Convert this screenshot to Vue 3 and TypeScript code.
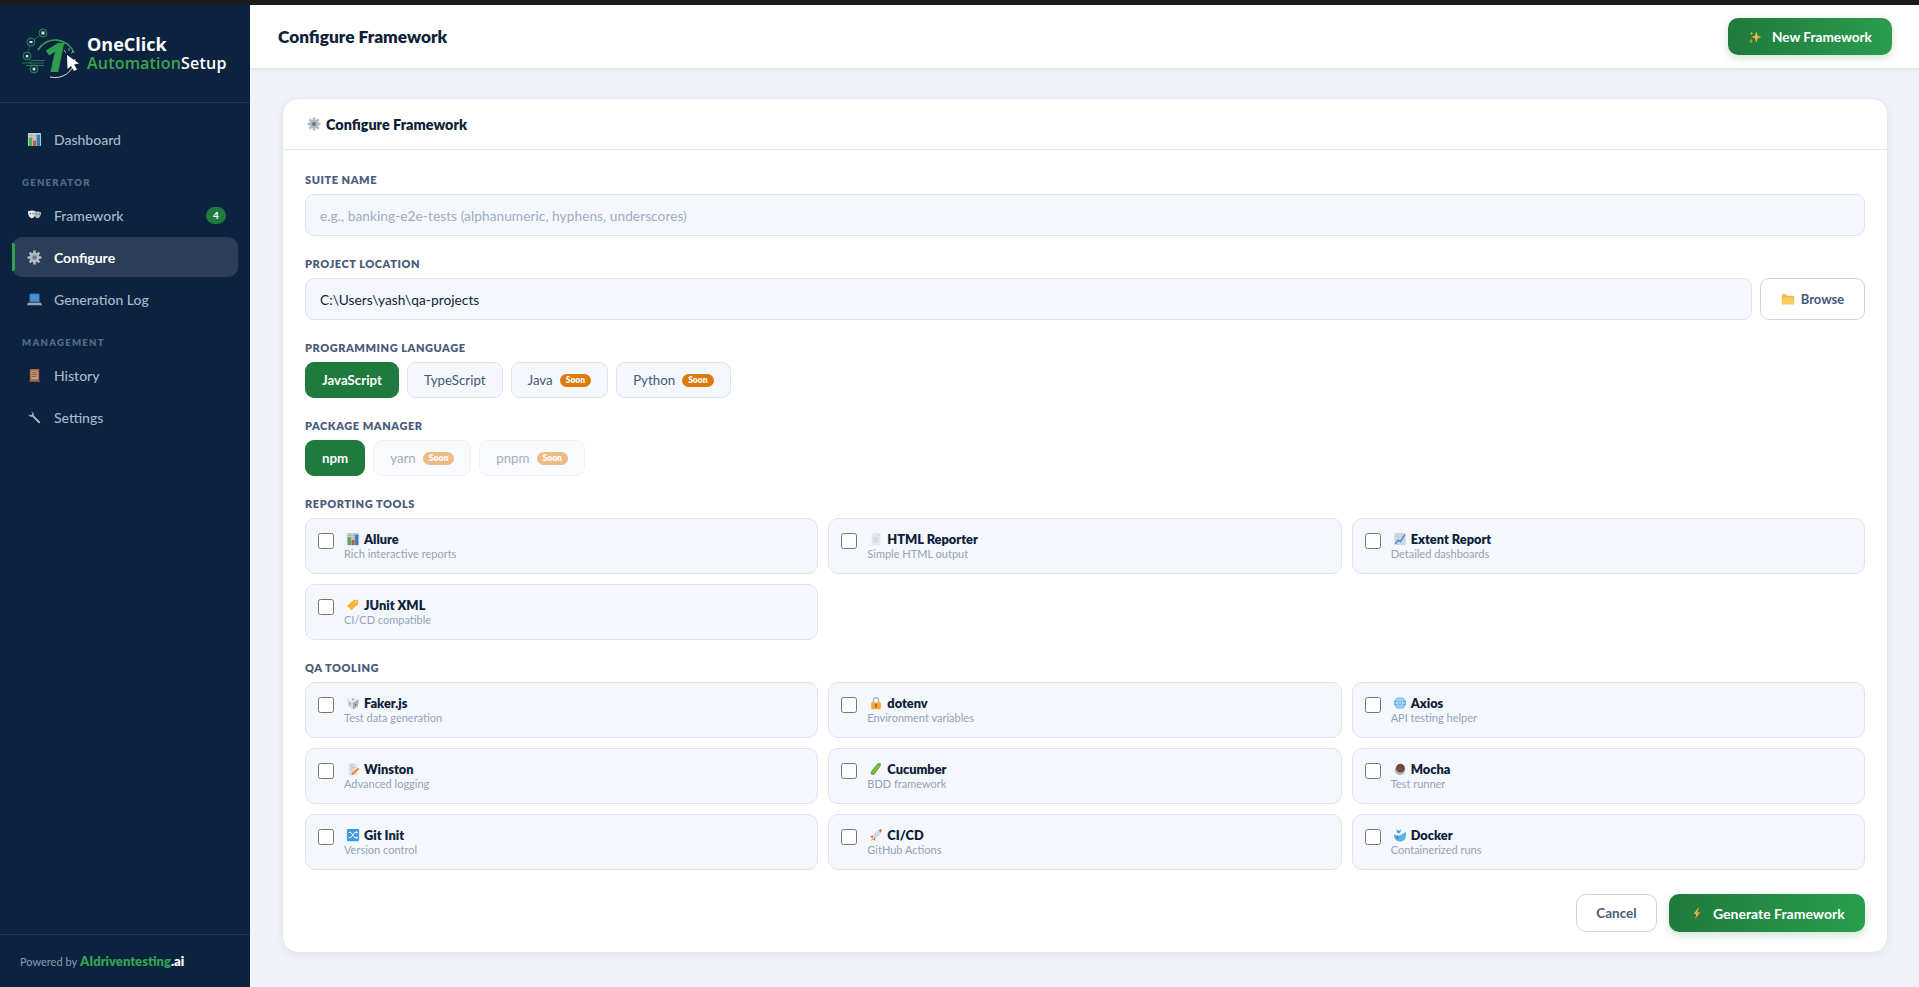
<template>
  <div class="page">
    <div class="top-strip"></div>
    <div class="shell">
      <aside class="sidebar">
        <div class="brand">
          <svg class="brand-mark" viewBox="0 0 60 52">
            <path d="M21 5 L9 14 L5 28 L12 41" fill="none" stroke="#2f6b58" stroke-width="0.8" />
            <g fill="#12304a" stroke="#2f9e4f" stroke-width="0.8">
              <circle cx="21" cy="5" r="4" />
              <circle cx="9" cy="14" r="4" />
              <circle cx="5" cy="28" r="4" />
              <circle cx="12" cy="41" r="4" />
            </g>
            <g fill="#d5dde6">
              <rect x="19.500" y="3.500" width="3" height="3" />
              <rect x="7.500" y="13" width="3" height="2" />
              <rect x="3.800" y="27" width="2.500" height="2.400" />
              <circle cx="12" cy="41" r="1.500" />
            </g>
            <path d="M16 22 A20 20 0 0 1 52 25" fill="none" stroke="#2f9e4f" stroke-width="1.600" />
            <path d="M28 49 A20 20 0 0 0 53 31" fill="none" stroke="#d5dde6" stroke-width="1" />
            <path d="M0 35 H22 M4 37.500 H22 M9 32.500 H23" stroke="#2f9e4f" stroke-width="0.700" />
            <text x="21" y="44" class="brand-one">1</text>
            <path d="M45 27 L45.500 41 L49 38 L52 43 L55 41.500 L52 36.500 L57 35.500 Z" fill="#fff" />
            <path d="M42 22 L44 25 M47 20 V23 M51 23 L49.500 25.500" stroke="#c8d3dc" stroke-width="0.700" />
          </svg>
          <div class="brand-text">
            <div class="brand-top">OneClick</div>
            <div class="brand-bottom"><span>Automation</span>Setup</div>
          </div>
        </div>

        <nav class="nav">
          <a class="nav-item"><svg class="nav-icon" viewBox="0 0 16 16" v-html="icons.chart"></svg>Dashboard</a>
          <div class="nav-label">GENERATOR</div>
          <a class="nav-item">
            <svg class="nav-icon" viewBox="0 0 16 16" v-html="icons.masks"></svg>Framework
            <span class="nav-badge">4</span>
          </a>
          <a class="nav-item active"><svg class="nav-icon" viewBox="0 0 16 16" v-html="icons.gear"></svg>Configure</a>
          <a class="nav-item"><svg class="nav-icon" viewBox="0 0 16 16" v-html="icons.laptop"></svg>Generation Log</a>
          <div class="nav-label">MANAGEMENT</div>
          <a class="nav-item"><svg class="nav-icon" viewBox="0 0 16 16" v-html="icons.scroll"></svg>History</a>
          <a class="nav-item"><svg class="nav-icon" viewBox="0 0 16 16" v-html="icons.wrench"></svg>Settings</a>
        </nav>

        <div class="powered">
          Powered by <b class="powered-name">AIdriventesting<i>.ai</i></b>
        </div>
      </aside>

      <div class="main">
        <header class="topbar">
          <h1>Configure Framework</h1>
          <button class="btn-green new-btn" type="button">
            <svg class="btn-icon" viewBox="0 0 16 16" v-html="icons.sparkles"></svg>New Framework
          </button>
        </header>

        <div class="content">
          <section class="card">
            <div class="card-head">
              <svg class="head-icon" viewBox="0 0 16 16" v-html="icons.gear"></svg>Configure Framework
            </div>
            <form class="card-body" @submit.prevent>
              <label class="field-label">SUITE NAME</label>
              <input
                class="text-input"
                type="text"
                v-model="suiteName"
                placeholder="e.g., banking-e2e-tests (alphanumeric, hyphens, underscores)"
              />

              <label class="field-label">PROJECT LOCATION</label>
              <div class="location-row">
                <input class="text-input" type="text" v-model="location" />
                <button class="browse-btn" type="button">
                  <svg class="browse-icon" viewBox="0 0 16 16" v-html="icons.folder"></svg>Browse
                </button>
              </div>

              <label class="field-label">PROGRAMMING LANGUAGE</label>
              <div class="chips">
                <button
                  v-for="l in languages"
                  :key="l.name"
                  type="button"
                  class="chip"
                  :class="{ selected: l.selected }"
                >
                  {{ l.name }}<span v-if="l.soon" class="soon">Soon</span>
                </button>
              </div>

              <label class="field-label">PACKAGE MANAGER</label>
              <div class="chips">
                <button
                  v-for="p in managers"
                  :key="p.name"
                  type="button"
                  class="chip"
                  :class="{ selected: p.selected, disabled: p.soon }"
                >
                  {{ p.name }}<span v-if="p.soon" class="soon">Soon</span>
                </button>
              </div>

              <label class="field-label">REPORTING TOOLS</label>
              <div class="tool-grid">
                <label v-for="t in reporting" :key="t.name" class="tool">
                  <input type="checkbox" class="tool-check" />
                  <span class="tool-text">
                    <span class="tool-name">
                      <svg class="tool-icon" viewBox="0 0 16 16" v-html="icons[t.icon]"></svg>{{ t.name }}
                    </span>
                    <span class="tool-desc">{{ t.desc }}</span>
                  </span>
                </label>
              </div>

              <label class="field-label">QA TOOLING</label>
              <div class="tool-grid">
                <label v-for="t in tooling" :key="t.name" class="tool">
                  <input type="checkbox" class="tool-check" />
                  <span class="tool-text">
                    <span class="tool-name">
                      <svg class="tool-icon" viewBox="0 0 16 16" v-html="icons[t.icon]"></svg>{{ t.name }}
                    </span>
                    <span class="tool-desc">{{ t.desc }}</span>
                  </span>
                </label>
              </div>

              <div class="actions">
                <button class="cancel-btn" type="button">Cancel</button>
                <button class="btn-green generate-btn" type="submit">
                  <svg class="btn-icon" viewBox="0 0 16 16" v-html="icons.bolt"></svg>Generate Framework
                </button>
              </div>
            </form>
          </section>
        </div>
      </div>
    </div>
  </div>
</template>

<script setup lang="ts">
import { ref } from 'vue';

const suiteName = ref('');
const location = ref('C:\\Users\\yash\\qa-projects');

const languages = [
  { name: 'JavaScript', selected: true, soon: false },
  { name: 'TypeScript', selected: false, soon: false },
  { name: 'Java', selected: false, soon: true },
  { name: 'Python', selected: false, soon: true },
];

const managers = [
  { name: 'npm', selected: true, soon: false },
  { name: 'yarn', selected: false, soon: true },
  { name: 'pnpm', selected: false, soon: true },
];

const reporting = [
  { name: 'Allure', desc: 'Rich interactive reports', icon: 'chart' },
  { name: 'HTML Reporter', desc: 'Simple HTML output', icon: 'page' },
  { name: 'Extent Report', desc: 'Detailed dashboards', icon: 'trend' },
  { name: 'JUnit XML', desc: 'CI/CD compatible', icon: 'tag' },
];

const tooling = [
  { name: 'Faker.js', desc: 'Test data generation', icon: 'dice' },
  { name: 'dotenv', desc: 'Environment variables', icon: 'lock' },
  { name: 'Axios', desc: 'API testing helper', icon: 'globe' },
  { name: 'Winston', desc: 'Advanced logging', icon: 'memo' },
  { name: 'Cucumber', desc: 'BDD framework', icon: 'cucumber' },
  { name: 'Mocha', desc: 'Test runner', icon: 'coffee' },
  { name: 'Git Init', desc: 'Version control', icon: 'shuffle' },
  { name: 'CI/CD', desc: 'GitHub Actions', icon: 'rocket' },
  { name: 'Docker', desc: 'Containerized runs', icon: 'whale' },
];

// small colour pictograms, drawn by hand on a 16 unit box
const icons: Record<string, string> = {
  chart:
    '<rect x="1" y="1" width="14" height="14" rx="1" fill="#c9ced6"/><path d="M1 4h14M1 7h14M5 1v14M10 1v14" stroke="#8e97a3" stroke-width=".5"/><rect x="2" y="6" width="3.500" height="9" fill="#4caf50"/><rect x="6.300" y="9" width="3.500" height="6" fill="#b5623c"/><rect x="10.500" y="3" width="3.500" height="12" fill="#2f7fc0"/>',
  masks:
    '<path d="M1 3.500c3-1.200 6-1.200 8 0 .2 4-1 7-4 7.500C2.500 10.500 1 7.500 1 3.500z" fill="#e6e8ec"/><path d="M7 4.500c3-1 5.500-1 8 0 0 3.500-1.500 6-4 6.500-2-.5-3.500-3-4-6.500z" fill="#b9bec8"/><circle cx="3.500" cy="6" r=".8" fill="#5b6270"/><circle cx="6.500" cy="6" r=".8" fill="#5b6270"/><circle cx="10" cy="6.500" r=".8" fill="#5b6270"/><circle cx="13" cy="6.500" r=".8" fill="#5b6270"/>',
  gear:
    '<g fill="#b4b9c4"><circle cx="8" cy="8" r="5.200"/><g stroke="#b4b9c4" stroke-width="2.800"><path d="M8 .6v14.800M.6 8h14.800M2.800 2.800l10.400 10.400M13.200 2.800 2.800 13.200"/></g></g><circle cx="8" cy="8" r="2.400" fill="#6d7482"/>',
  laptop:
    '<rect x="2.500" y="1.500" width="11" height="9.500" rx=".6" fill="#2c6fb3"/><rect x="3.500" y="2.500" width="9" height="7.500" fill="#4a90d2"/><path d="M1 11.500h14l1 2.500H0z" fill="#9aa3ae"/>',
  scroll:
    '<rect x="3" y="1" width="10" height="13" rx=".8" fill="#a86a4c"/><rect x="4.500" y="3" width="7" height="9" fill="#c79a7e"/><path d="M5.500 5h5M5.500 7h5M5.500 9h4" stroke="#6f4430" stroke-width=".8"/><path d="M2 13.500h11.500l1 1.500H3z" fill="#8c5238"/>',
  wrench:
    '<path d="M14 12.600 7.200 5.800c.5-1.700-.6-4-3-4.300L6 3.500 5 5 3 5.600 1.500 4c.1 2.400 2.200 3.800 4.100 3.100L12.500 14c.7.600 2.200-.6 1.500-1.400z" fill="#aab1bc"/>',
  sparkles:
    '<path d="M9.500 1.500 11 6.500l4.500 1.500-4.500 1.500L9.500 14.500 8 9.500 3.500 8 8 6.500z" fill="#f8b83e"/><path d="M3.500 9.500 4.200 12 6 12.700 4.200 13.400 3.500 15.500 2.800 13.400 1 12.700 2.800 12z" fill="#ef8f35"/><path d="M4 1.500 4.500 3.500 6 4 4.500 4.500 4 6 3.500 4.500 2 4 3.500 3.500z" fill="#f8b83e"/>',
  folder:
    '<path d="M1 3.500c0-.6.400-1 1-1h4l1.500 1.800H14c.6 0 1 .4 1 1V13c0 .6-.4 1-1 1H2c-.6 0-1-.4-1-1z" fill="#f6b73c"/><path d="M1 6h14v7c0 .6-.4 1-1 1H2c-.6 0-1-.4-1-1z" fill="#fbc95d"/>',
  page:
    '<path d="M3 1h7l3 3v11H3z" fill="#e6e9ef"/><path d="M10 1v3h3z" fill="#c4c9d3"/><path d="M5 7h6M5 9h6M5 11h4" stroke="#bcc2cc" stroke-width=".8"/>',
  trend:
    '<rect x="1.500" y="1" width="13" height="14" fill="#d3d8e0"/><path d="M1.500 5h13M1.500 9h13M5.500 1v14M10 1v14" stroke="#b5bcc8" stroke-width=".4"/><path d="M2.500 13.500 6 9.500l2.500 1.500 5-8" fill="none" stroke="#2f86cf" stroke-width="1.400"/>',
  tag:
    '<path d="M1 9 8.500 2.500l5.500-.7-.3 5.200L6.300 14z" fill="#f6b73c"/><circle cx="11.500" cy="4.500" r="1" fill="#f9e3ac"/>',
  dice:
    '<path d="M8 1 14.500 4 13.500 12 8 15 2.500 12 1.500 4z" fill="#d6d9df"/><path d="M8 7.500 14.500 4 8 1 1.500 4z" fill="#eceef2"/><path d="M8 7.500V15l5.500-3 1-8z" fill="#a8aeb9"/><circle cx="4.500" cy="9" r=".8" fill="#555"/><circle cx="11" cy="10" r=".8" fill="#555"/><circle cx="8" cy="4" r=".8" fill="#555"/>',
  lock:
    '<path d="M5 7.500V5a3 3 0 0 1 6 0v2.500" fill="none" stroke="#aeb4bf" stroke-width="1.500"/><rect x="2.500" y="7" width="11" height="8" rx="1" fill="#f0a838"/><rect x="7.300" y="9" width="1.400" height="4" fill="#7a5210"/>',
  globe:
    '<circle cx="8" cy="8" r="7" fill="#5db2ec"/><g fill="none" stroke="#d8eefb" stroke-width=".8"><ellipse cx="8" cy="8" rx="3.200" ry="7"/><path d="M8 1v14M1 8h14M2 4.500h12M2 11.500h12"/></g>',
  memo:
    '<path d="M3 1h7l3 3v11H3z" fill="#dfe2e8"/><path d="M5 4h4M5 6.500h6M5 9h3" stroke="#aab0bb" stroke-width=".8"/><path d="M14 6.500 15.500 8 8.500 14.500 6 15l.8-2.600z" fill="#ef8a2e"/>',
  cucumber:
    '<path d="M3 14.500c-1.500-1-1.500-2.500-.5-4L9 2.500c1.300-1.300 3.500-1.800 4.300-.8.900 1-.1 3-1 4.300L6.500 14c-1 1-2.400 1.300-3.500.5z" fill="#6cab3a"/><path d="M4.500 12 11 4" stroke="#a8d66f" stroke-width="1"/>',
  coffee:
    '<ellipse cx="8" cy="9" rx="6" ry="6" fill="#b4b6c2"/><circle cx="8.500" cy="7" r="5" fill="#74483a"/>',
  shuffle:
    '<rect x="1" y="1" width="14" height="14" rx="1.500" fill="#3e9ae0"/><path d="M3 5h2.500l4.500 6H12M3 11h2.500L10 5h2" fill="none" stroke="#fff" stroke-width="1.100"/><path d="M11.500 3.300 14 5l-2.500 1.700zM11.500 9.300 14 11l-2.500 1.700z" fill="#fff"/>',
  rocket:
    '<path d="M14.500 1.500c-3 .3-6 2-8 5L5 10l1.500 1.500 3.500-1.500c3-2 4.300-5 4.500-8.500z" fill="#d3d7de"/><path d="M14.500 1.500c-1.500.1-2.700.5-3.500 1l2.500 2.500c.5-1 1-2.200 1-3.500z" fill="#e0603a"/><path d="M5 8.500 1.500 9.500 3 11l2-.5zM7.500 11 6.500 14.500 5 13l.5-2z" fill="#d96a42"/><path d="M4.500 11.500 1 15l3.500-1.500 1-1z" fill="#f3a13c"/>',
  whale:
    '<path d="M1 7.500c2 0 3.500 1 5.500 1S10 7 14.500 4.500c1 4 .5 11-6.500 11-4.500 0-7-3.500-7-8z" fill="#5cb3ea"/><path d="M4 .8c.5 1.300 1.200 2 2.500 2.300 1.300-.3 2-1 2.500-2.300.3 2.500-1 5-2.500 5.500C5 5.800 3.700 3.300 4 .8z" fill="#3e9ae0"/><circle cx="5" cy="11" r=".9" fill="#1d4f78"/>',
  bolt:
    '<path d="M10.500 1 4 9h3.500L5.500 15l6.500-8H8.500z" fill="#f09a2e"/><path d="M9 3 6 8.500h2L7 12" fill="none" stroke="#f9cf62" stroke-width=".8"/>',
};
</script>

<style>
html,
body {
  margin: 0;
  background: #eff2f7;
}
</style>

<style scoped>
.page {
  height: 987px;
  display: flex;
  flex-direction: column;
  font-family: "Lato", "Noto Sans", sans-serif;
  color: #0f1f3a;
  overflow: hidden;
}

.top-strip {
  height: 5px;
  flex: none;
  background: #1c1c1c;
}

.shell {
  flex: 1;
  min-height: 0;
  display: flex;
}

/* sidebar */
.sidebar {
  width: 250px;
  flex: none;
  display: flex;
  flex-direction: column;
  background: #0c2340;
}

.brand {
  height: 98px;
  box-sizing: border-box;
  flex: none;
  display: flex;
  align-items: center;
  padding-left: 22px;
  gap: 5px;
  border-bottom: 1px solid #1d3450;
}

.brand-mark {
  width: 60px;
  height: 52px;
  overflow: visible;
}

.brand-one {
  font-family: "Open Sans", sans-serif;
  font-size: 40px;
  font-weight: 800;
  font-style: italic;
  fill: #2f9e4f;
}

.brand-text {
  font-family: "Open Sans", sans-serif;
  font-weight: 700;
  color: #fff;
}

.brand-top {
  font-size: 18px;
  line-height: 19px;
}

.brand-bottom {
  font-size: 16px;
  font-weight: 600;
  line-height: 19px;
  letter-spacing: 0.2px;
}

.brand-bottom span {
  color: #3fa34d;
}

.nav {
  flex: 1;
  padding: 16px 12px 0;
  display: flex;
  flex-direction: column;
  gap: 2px;
}

.nav-item {
  position: relative;
  height: 40px;
  flex: none;
  display: flex;
  align-items: center;
  padding-left: 15px;
  gap: 12px;
  border-radius: 10px;
  font-size: 14px;
  font-weight: 500;
  color: #a9b6cc;
}

.nav-item.active {
  background: #2b3d57;
  color: #fff;
  font-weight: 700;
}

.nav-item.active::before {
  content: "";
  position: absolute;
  left: 0;
  top: 6px;
  bottom: 6px;
  width: 3px;
  border-radius: 0 2px 2px 0;
  background: #2ea44f;
}

.nav-icon {
  width: 15px;
  height: 15px;
  flex: none;
}

.nav-badge {
  margin-left: auto;
  margin-right: 12px;
  width: 20px;
  height: 17px;
  border-radius: 9px;
  background: #1f7a3d;
  color: #fff;
  font-size: 10px;
  font-weight: 700;
  display: flex;
  align-items: center;
  justify-content: center;
}

.nav-label {
  margin: 15px 0 3px 10px;
  height: 14px;
  line-height: 14px;
  font-size: 9.500px;
  font-weight: 800;
  letter-spacing: 1.300px;
  color: #56678a;
}

.powered {
  height: 52px;
  flex: none;
  display: flex;
  align-items: center;
  gap: 3px;
  padding-left: 20px;
  border-top: 1px solid #1d3450;
  font-size: 11px;
  color: #8a9bb6;
}

.powered-name {
  font-size: 13px;
  font-weight: 800;
  color: #2ea44f;
}

.powered-name i {
  font-style: normal;
  color: #fff;
}

/* main column */
.main {
  flex: 1;
  min-width: 0;
  display: flex;
  flex-direction: column;
}

.topbar {
  height: 64px;
  box-sizing: border-box;
  flex: none;
  display: flex;
  align-items: center;
  justify-content: space-between;
  padding: 0 27px 0 28px;
  background: #fff;
  border-bottom: 1px solid #dfe4ec;
  box-shadow: 0 1px 3px rgba(15, 31, 58, 0.06);
}

.topbar h1 {
  margin: 0;
  font-size: 17.300px;
  font-weight: 800;
}

.btn-green {
  display: flex;
  align-items: center;
  border: 0;
  border-radius: 10px;
  color: #fff;
  font-family: inherit;
  font-weight: 700;
  background: linear-gradient(90deg, #1f7a3d, #2a9d4e);
  box-shadow: 0 3px 8px rgba(31, 122, 61, 0.22);
}

.new-btn {
  width: 164px;
  height: 37px;
  padding: 0 0 0 20px;
  gap: 10px;
  font-size: 13.600px;
}

.btn-icon {
  width: 14px;
  height: 14px;
  flex: none;
}

.content {
  flex: 1;
  min-height: 0;
  padding: 29px 31px 0 32px;
}

.card {
  background: #fff;
  border: 1px solid #e3e8f0;
  border-radius: 16px;
  box-shadow: 0 2px 8px rgba(15, 31, 58, 0.06);
}

.card-head {
  height: 50px;
  display: flex;
  align-items: center;
  gap: 5px;
  padding-left: 24px;
  border-bottom: 1px solid #e1e6ee;
  font-size: 14.400px;
  font-weight: 800;
}

.head-icon {
  width: 14px;
  height: 14px;
}

.card-body {
  padding: 23px 22px 20px;
  display: flex;
  flex-direction: column;
}

.field-label {
  height: 14px;
  line-height: 14px;
  margin-bottom: 7px;
  font-size: 11px;
  font-weight: 800;
  letter-spacing: 0.55px;
  color: #4a5c7a;
}

.text-input {
  box-sizing: border-box;
  width: 100%;
  height: 42px;
  margin-bottom: 21px;
  padding: 0 14px;
  border: 1px solid #dde4ef;
  border-radius: 9px;
  outline: none;
  background: #f4f7fc;
  color: #0f1f3a;
  font-family: inherit;
  font-size: 13.700px;
  letter-spacing: 0.05px;
}

.text-input::placeholder {
  color: #a0aec0;
  opacity: 1;
}

.location-row {
  display: flex;
  gap: 8px;
}

.location-row .text-input {
  flex: 1;
  min-width: 0;
}

.browse-btn {
  box-sizing: border-box;
  width: 105px;
  height: 42px;
  flex: none;
  display: flex;
  align-items: center;
  justify-content: center;
  gap: 6px;
  border: 1px solid #cdd5e3;
  border-radius: 9px;
  background: #fff;
  color: #46587a;
  font-family: inherit;
  font-size: 13px;
  font-weight: 700;
}

.browse-icon {
  width: 14px;
  height: 14px;
}

.chips {
  display: flex;
  gap: 8px;
  margin-bottom: 21px;
}

.chip {
  box-sizing: border-box;
  height: 36px;
  display: flex;
  align-items: center;
  gap: 7px;
  padding: 0 16px;
  border: 1px solid #dde4ef;
  border-radius: 9px;
  background: #f4f7fc;
  color: #46587a;
  font-family: inherit;
  font-size: 13.300px;
}

.chip.selected {
  border-color: #1f7a3d;
  background: #1f7a3d;
  color: #fff;
  font-weight: 700;
}

.chip.disabled {
  opacity: 0.5;
}

.soon {
  padding: 0 6px;
  height: 13px;
  line-height: 13px;
  border-radius: 7px;
  background: #dd7a0c;
  color: #fff;
  font-size: 8.500px;
  font-weight: 800;
}

.tool-grid {
  display: grid;
  grid-template-columns: repeat(3, 1fr);
  gap: 10px;
  margin-bottom: 21px;
}

.tool {
  box-sizing: border-box;
  height: 56px;
  display: flex;
  align-items: flex-start;
  gap: 10px;
  padding: 13px 12px;
  border: 1px solid #dde4ef;
  border-radius: 10px;
  background: #f4f7fc;
}

.tool-check {
  width: 16px;
  height: 16px;
  margin: 1px 0 0;
  flex: none;
}

.tool-text {
  display: flex;
  flex-direction: column;
  margin-top: -1px;
}

.tool-name {
  display: flex;
  align-items: center;
  gap: 4px;
  height: 16px;
  font-size: 12.800px;
  font-weight: 800;
}

.tool-icon {
  width: 14px;
  height: 14px;
  flex: none;
  margin-left: 2px;
}

.tool-desc {
  height: 14px;
  line-height: 14px;
  font-size: 11px;
  color: #94a3b8;
}

.actions {
  display: flex;
  justify-content: flex-end;
  gap: 12px;
  margin-top: 3px;
}

.cancel-btn {
  box-sizing: border-box;
  width: 81px;
  height: 38px;
  border: 1px solid #cdd5e3;
  border-radius: 10px;
  background: #fff;
  color: #4a5c7a;
  font-family: inherit;
  font-size: 13.500px;
  font-weight: 700;
}

.generate-btn {
  width: 196px;
  height: 38px;
  padding: 0 0 0 21px;
  gap: 9px;
  font-size: 14px;
}
</style>
